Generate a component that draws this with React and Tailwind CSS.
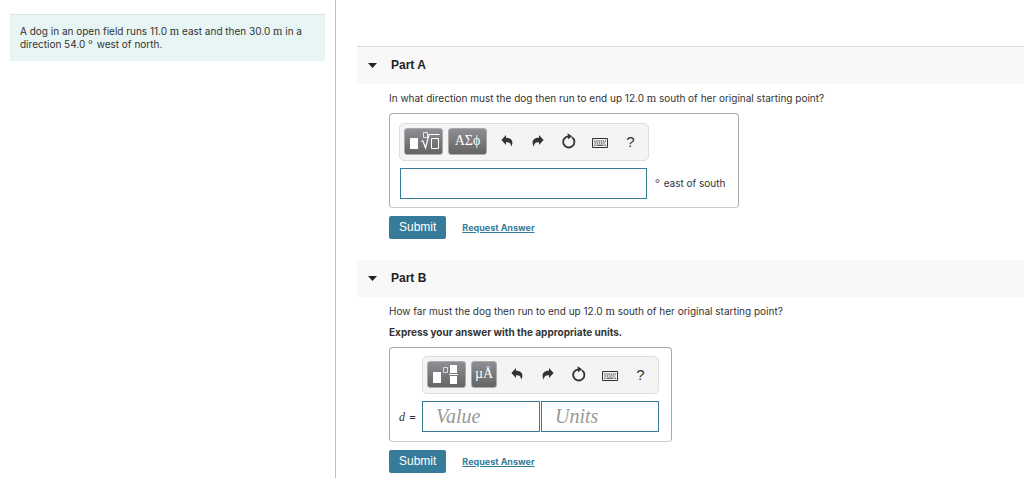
const App = () => {
  return (
    <div className="flex min-h-screen bg-white font-[Inter,Arial,sans-serif] text-[10px] leading-[13px] text-[#333]">
      {/* Problem statement */}
      <aside className="w-[336px] shrink-0 border-r border-[#b9c0cb] pt-3.5 pl-2.5 pr-2.5">
        <p className="border-t border-[#dce3e2] bg-[#e7f5f5] p-2.5">
          A dog in an open field runs 11.0 <Unit /> east and then 30.0 <Unit /> in a direction 54.0 <Degree /> west of
          north.
        </p>
      </aside>

      <main className="min-w-0 flex-1 pt-[46px] pl-[21px]">
        <section>
          <div className="border-t border-[#dcdcdc]">
            <PartHeader title="Part A" />
          </div>
          <div className="pt-2 pl-8">
            <p id="question-a">
              In what direction must the dog then run to end up 12.0 <Unit /> south of her original starting point?
            </p>
            <div className="mt-2 w-fit rounded border border-[#aaa] border-b-[#ccc] pt-[9px] pr-3 pb-2 pl-[9px]">
              <Toolbar>
                <ToolButton label="Templates" wide>
                  <RootIcon />
                </ToolButton>
                <ToolButton label="Symbols" wide>
                  ΑΣϕ
                </ToolButton>
              </Toolbar>
              <div className="mt-[7px] flex items-center gap-2 px-px">
                <input
                  type="text"
                  aria-labelledby="question-a"
                  className="h-[31px] w-[247px] border border-[#367b99] bg-white px-2 text-base outline-none"
                />
                <span>
                  <Degree /> east of south
                </span>
              </div>
            </div>
            <Actions />
          </div>
        </section>

        <section className="mt-[21px]">
          <PartHeader title="Part B" />
          <div className="pt-2 pl-8">
            <p>
              How far must the dog then run to end up 12.0 <Unit /> south of her original starting point?
            </p>
            <p className="mt-2 font-bold">Express your answer with the appropriate units.</p>
            <div className="mt-2 grid w-fit grid-cols-[23px_auto] items-center rounded border border-[#aaa] border-b-[#ccc] pt-2 pr-3 pb-[9px] pl-[9px]">
              <div className="col-start-2">
                <Toolbar>
                  <ToolButton label="Templates" wide>
                    <FractionIcon />
                  </ToolButton>
                  <ToolButton label="Units">µÅ</ToolButton>
                </Toolbar>
              </div>
              <span className="mt-[7px] text-[12px]">
                <i className="font-['Liberation_Serif',serif]">d</i> =
              </span>
              <div className="mt-[7px] flex gap-px">
                <AnswerField name="Value" />
                <AnswerField name="Units" />
              </div>
            </div>
            <Actions />
          </div>
        </section>
      </main>
    </div>
  );
};

const Unit = () => <span className="font-['Liberation_Serif',serif] text-[12px] leading-none">m</span>;

const Degree = () => (
  <span className="mr-px font-['Liberation_Serif',serif] text-[12px] leading-none">°</span>
);

const PartHeader = ({ title }) => (
  <h2>
    <button type="button" className="flex h-[37px] w-full items-center gap-3.5 bg-[#f8f8f8] pl-[11px] text-left font-['Liberation_Sans',Arial,sans-serif] text-[12px] font-bold text-[#222]">
      <svg viewBox="0 0 9 5" className="h-[5px] w-[9px] fill-current">
        <path d="M0 0h9L4.5 5z" />
      </svg>
      {title}
    </button>
  </h2>
);

const Toolbar = ({ children }) => (
  <div className="flex h-[38px] w-fit items-center rounded-[5px] border border-[#ddd] bg-[#f4f4f4] pr-0.5 pb-0.5 pl-1 text-[#333]">
    <div className="mr-1 flex gap-[5px]">{children}</div>
    <IconButton label="Undo">
      <ArrowIcon />
    </IconButton>
    <IconButton label="Redo">
      <ArrowIcon flipped />
    </IconButton>
    <IconButton label="Reset">
      <svg viewBox="0 0 14 16" className="h-4 w-3.5">
        <path d="M9.9 4.2A5.6 5.6 0 1 1 6.2 3.3" fill="none" stroke="currentColor" strokeWidth="1.8" />
        <path d="M5.6 0.2 10.2 3.2 6 6.2z" fill="currentColor" />
      </svg>
    </IconButton>
    <IconButton label="Keyboard">
      <svg viewBox="0 0 16 10" className="mt-1 h-2.5 w-4" fill="none" stroke="currentColor">
        <path d="M.5 .5h15v9H.5z" />
        <path d="M2 3h12M2.5 5h11" strokeDasharray="1.4 .8" />
        <path d="M2 7.2h1.5M4.5 7.2h7M12.5 7.2H14" />
      </svg>
    </IconButton>
    <IconButton label="Help">?</IconButton>
  </div>
);

const ToolButton = ({ label, wide, children }) => (
  <button
    type="button"
    aria-label={label}
    className={`flex h-[27px] items-center justify-center rounded-[3px] border border-[#aaa] bg-linear-to-b from-[#8f8e94] to-[#646464] font-['Liberation_Serif',serif] text-sm leading-none text-white ${wide ? 'w-[39px]' : 'w-[26px]'}`}
  >
    {children}
  </button>
);

const IconButton = ({ label, children }) => (
  <button
    type="button"
    aria-label={label}
    className="flex h-7 w-[31px] items-center justify-center font-['Liberation_Sans',Arial,sans-serif] text-[15px]"
  >
    {children}
  </button>
);

const ArrowIcon = ({ flipped }) => (
  <svg viewBox="0 0 12 12" className={`h-3 w-3 fill-current ${flipped ? '-scale-x-100' : ''}`}>
    <path d="M5 0v2.8c4 0 6.4 1.8 6.4 5 0 1.5-.5 2.7-1.4 4 .1-3.3-1.3-4.6-5-4.6V10L.4 5z" />
  </svg>
);

const RootIcon = () => (
  <svg viewBox="0 0 32 20" className="h-5 w-8 shrink-0" fill="none" stroke="white">
    <path d="M2 7h8v11H2z" fill="white" stroke="none" />
    <path d="M15.5 1.5h4v5h-4z" strokeWidth=".8" />
    <path d="M13 10h2l2.5 7L21 3.5h10.5" strokeWidth="1.2" />
    <path d="M23.5 7.5h7v10h-7z" />
  </svg>
);

const FractionIcon = () => (
  <svg viewBox="0 0 32 22" className="h-[22px] w-8 shrink-0" fill="white">
    <path d="M2 9h8v11H2zM19 2h7v8h-7zM19 13h7v8h-7zM18 11h9v1h-9z" />
    <path d="M12.5 4.5h4v5h-4z" fill="none" stroke="white" strokeWidth=".7" />
  </svg>
);

const AnswerField = ({ name }) => (
  <input
    type="text"
    aria-label={name}
    placeholder={name}
    className="h-[31px] w-[118px] border border-[#367b99] bg-white px-[13px] font-['Liberation_Serif',serif] text-xl italic outline-none placeholder:text-[#999]"
  />
);

const Actions = () => (
  <div className="mt-2 flex items-center gap-4">
    <button
      type="button"
      className="h-[23px] rounded-xs bg-[#367b99] px-2.5 font-['Liberation_Sans',Arial,sans-serif] text-[12px] text-white"
    >
      Submit
    </button>
    <a href="#request" className="text-[9px] font-bold text-[#367b99] underline">
      Request Answer
    </a>
  </div>
);

export default App;
